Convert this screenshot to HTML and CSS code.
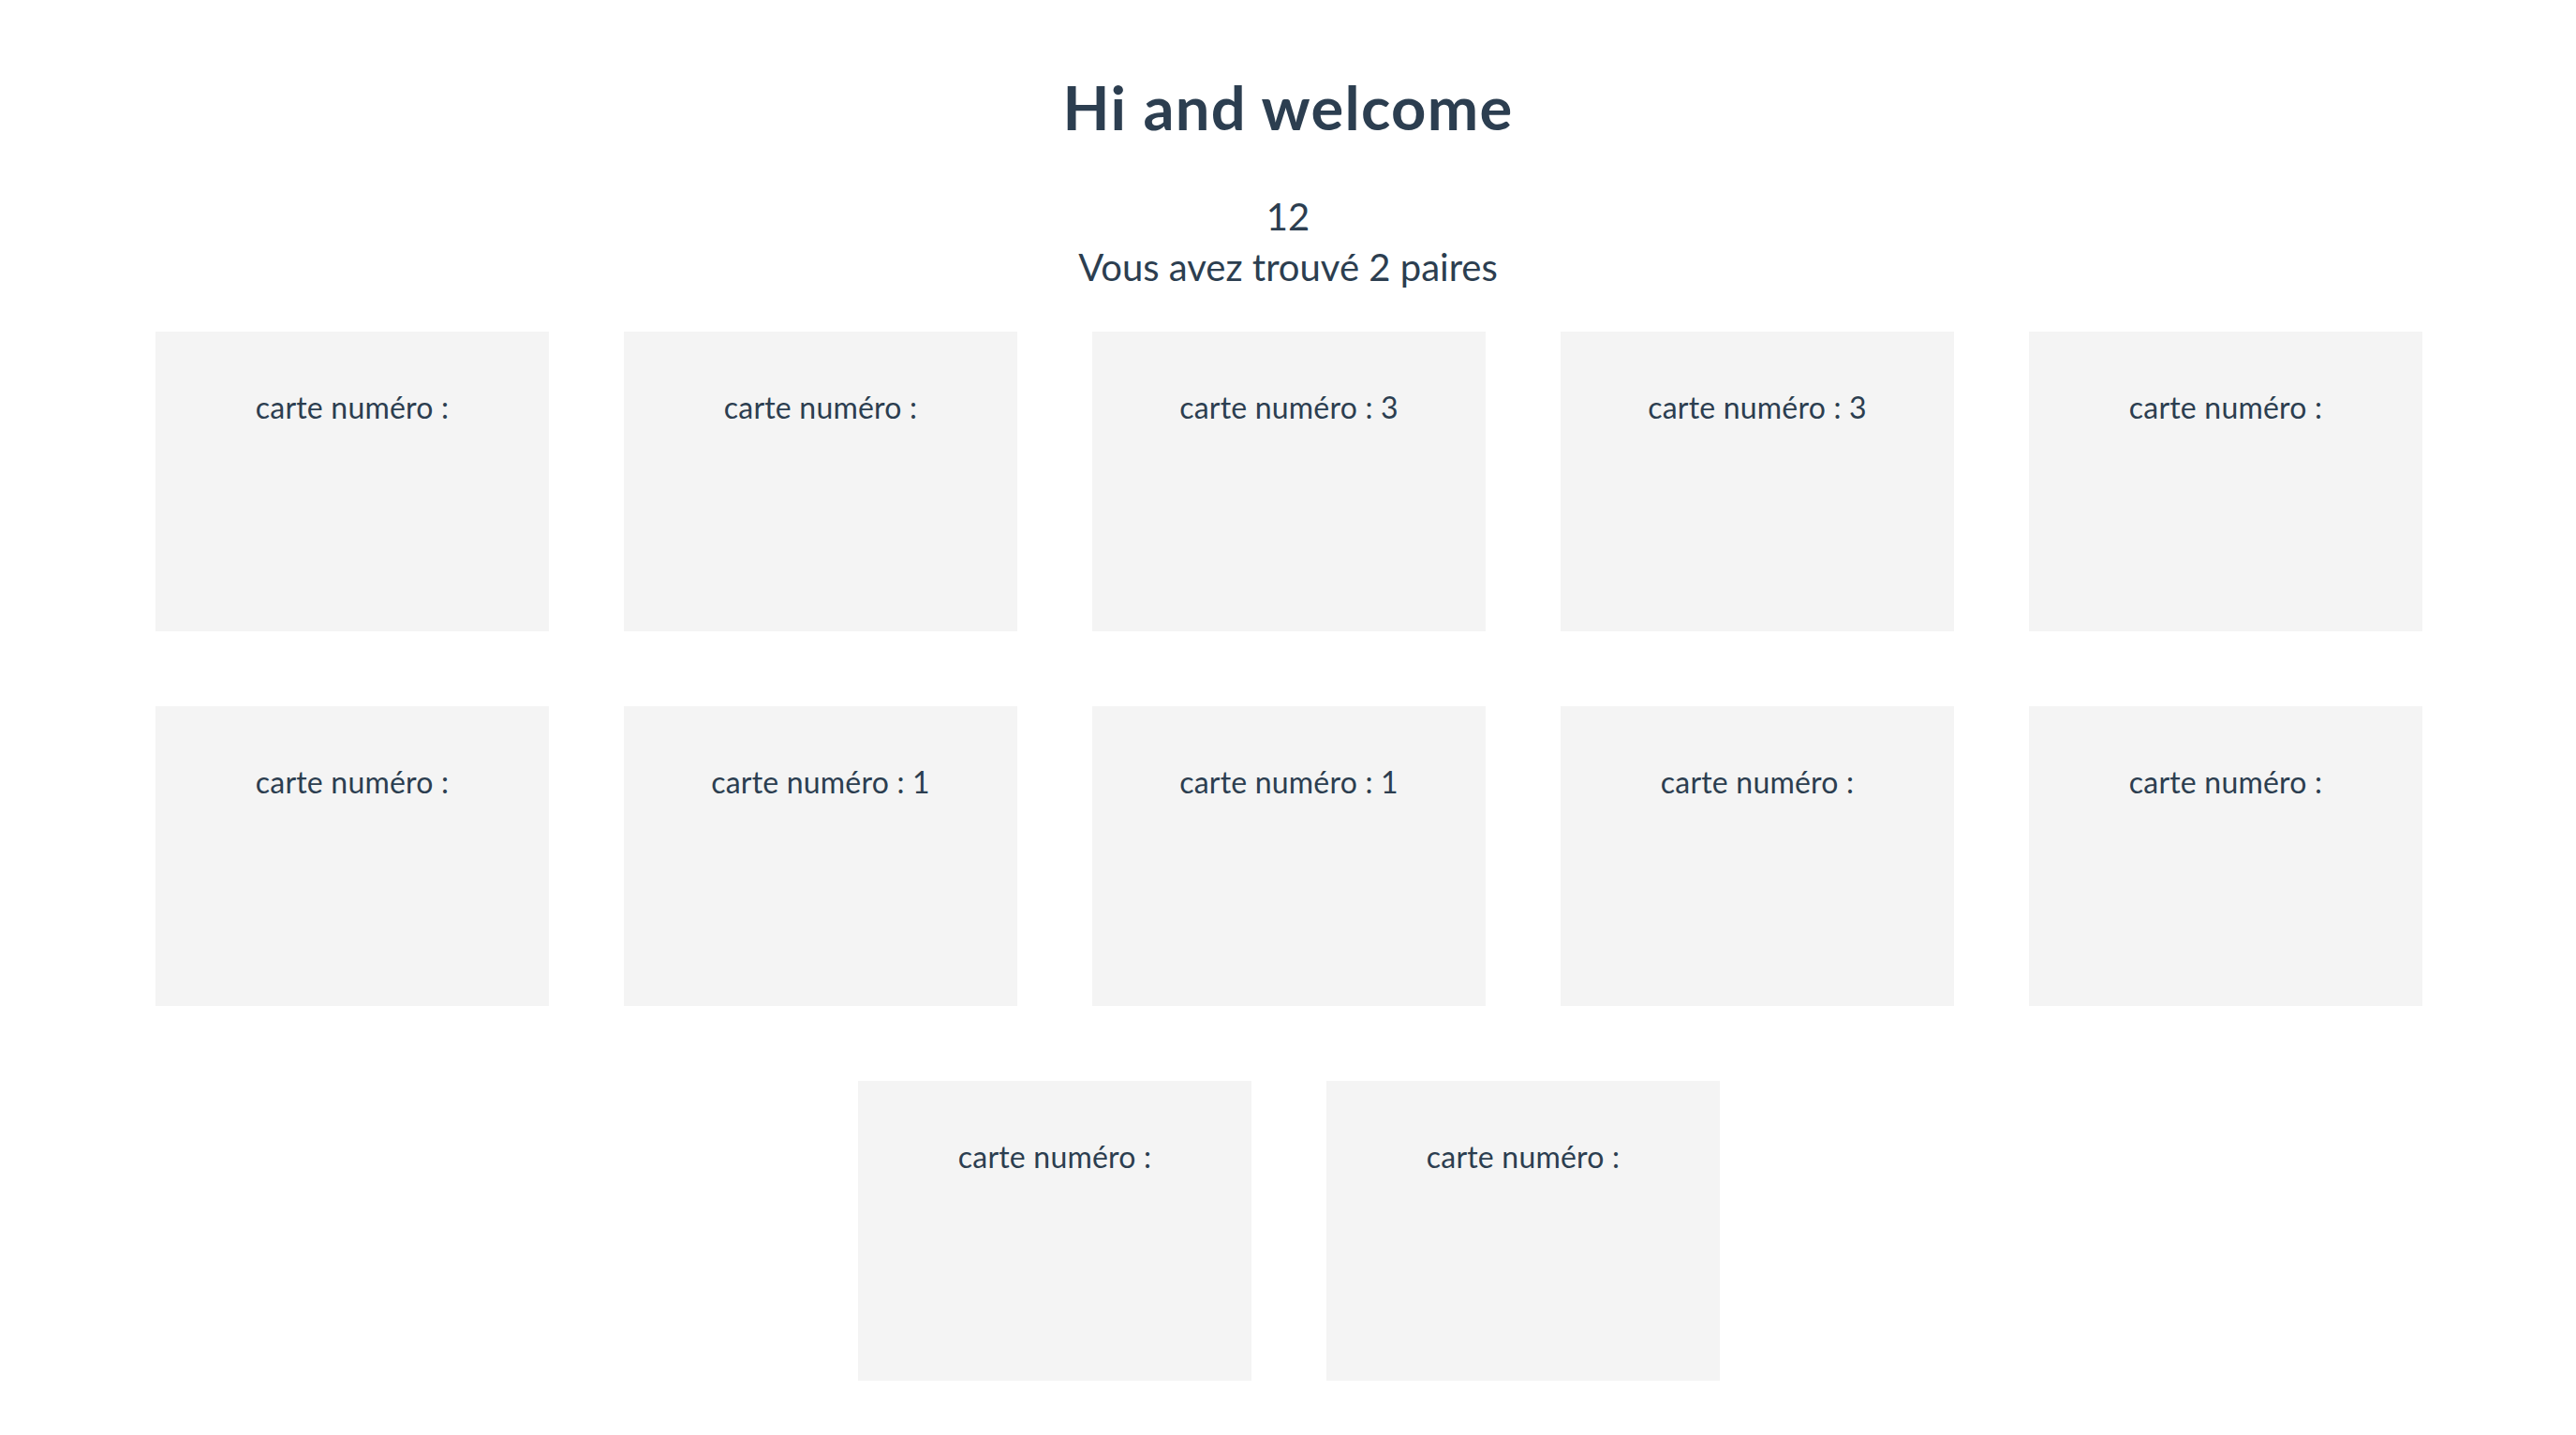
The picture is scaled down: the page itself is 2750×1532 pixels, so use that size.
FILE: index.html
```html
<!DOCTYPE html>
<html lang="fr">
<head>
<meta charset="utf-8">
<title>Memory</title>
<link rel="stylesheet" href="styles.css">
</head>
<body>
<div class="app">
  <h1 class="title">Hi and welcome</h1>
  <div class="counter">12</div>
  <div class="found">Vous avez trouvé 2 paires</div>
  <div class="board">
    <div class="card"><p class="card-label">carte numéro : </p></div>
    <div class="card"><p class="card-label">carte numéro : </p></div>
    <div class="card"><p class="card-label">carte numéro : 3</p></div>
    <div class="card"><p class="card-label">carte numéro : 3</p></div>
    <div class="card"><p class="card-label">carte numéro : </p></div>
    <div class="card"><p class="card-label">carte numéro : </p></div>
    <div class="card"><p class="card-label">carte numéro : 1</p></div>
    <div class="card"><p class="card-label">carte numéro : 1</p></div>
    <div class="card"><p class="card-label">carte numéro : </p></div>
    <div class="card"><p class="card-label">carte numéro : </p></div>
    <div class="card"><p class="card-label">carte numéro : </p></div>
    <div class="card"><p class="card-label">carte numéro : </p></div>
  </div>
</div>
</body>
</html>
```
FILE: styles.css
```css
html, body {
  margin: 0;
  padding: 0;
  background: #ffffff;
}

.app {
  font-family: Lato, "Open Sans", "Liberation Sans", sans-serif;
  color: #2c3e50;
  text-align: center;
  padding-top: 76px;
  -webkit-font-smoothing: antialiased;
}

.title {
  margin: 0 0 51px;
  font-size: 65px;
  line-height: 77px;
  font-weight: 700;
  letter-spacing: 1.3px;
}

.counter,
.found {
  font-size: 40px;
  line-height: 54px;
  font-weight: 400;
}

.board {
  display: flex;
  flex-wrap: wrap;
  justify-content: center;
  padding: 2px 0 0 2px;
}

.card {
  width: 420px;
  height: 320px;
  margin: 40px;
  background: #f4f4f4;
  box-sizing: border-box;
  padding-top: 62px;
}

.card-label {
  margin: 0;
  font-size: 32px;
  line-height: 37px;
  letter-spacing: 0.2px;
}
```
